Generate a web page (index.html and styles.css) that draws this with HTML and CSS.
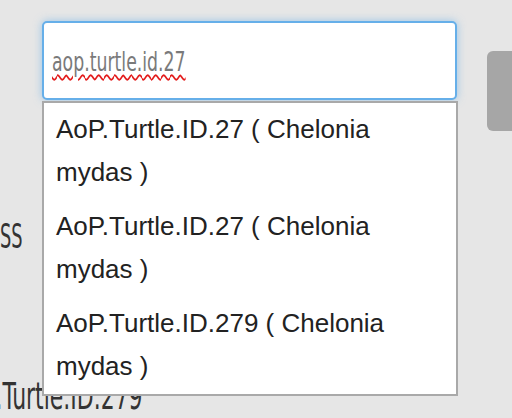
FILE: index.html
```html
<!DOCTYPE html>
<html lang="en">
<head>
<meta charset="utf-8">
<title>Turtle search</title>
<link rel="stylesheet" href="styles.css">
</head>
<body>
<div class="page">
  <div class="search-row">
    <div class="search">
      <div class="search-input"><span class="query">aop.turtle.id.27</span></div>
      <ul class="suggestions">
        <li>AoP.Turtle.ID.27 ( Chelonia mydas )</li>
        <li>AoP.Turtle.ID.27 ( Chelonia mydas )</li>
        <li>AoP.Turtle.ID.279 ( Chelonia mydas )</li>
      </ul>
    </div>
    <div class="side-btn"></div>
  </div>
  <div class="label label-ss"><span class="squeeze">SS</span></div>
  <div class="label label-id"><span class="squeeze">P.Turtle.ID.279</span></div>
</div>
</body>
</html>
```
FILE: styles.css
```css
html, body {
  margin: 0;
  padding: 0;
  background: #e6e6e6;
  overflow: hidden;
}

.page {
  padding-top: 21px;
  width: 512px;
  height: 418px;
  box-sizing: border-box;
  overflow: hidden;
}

.search-row {
  display: flex;
  align-items: flex-start;
  gap: 30px;
  margin-left: 42px;
}

.search {
  position: relative;
  width: 415px;
  flex: none;
}

.search-input {
  box-sizing: border-box;
  height: 79px;
  border: 2px solid #66afe9;
  border-radius: 5px;
  background: #fff;
  box-shadow: 0 0 8px rgba(102, 175, 233, 0.6);
  padding: 25px 0 0 8px;
  font-family: "DejaVu Sans Condensed", "Liberation Sans", sans-serif;
  font-size: 26px;
  line-height: 28px;
  color: #7a7a7a;
}

.query {
  display: inline-block;
  transform: scaleX(0.74);
  transform-origin: left center;
  text-decoration: underline wavy #e31b1b;
  text-decoration-thickness: 1.5px;
  text-underline-offset: 3px;
}

.suggestions {
  position: absolute;
  left: 0;
  top: 80px;
  width: 416px;
  box-sizing: border-box;
  margin: 0;
  padding: 0;
  list-style: none;
  background: #fff;
  border: 2px solid #a9a9a9;
  z-index: 2;
}

.suggestions li {
  padding: 5px 20px 6px 12px;
  font-family: "Liberation Sans", Arial, sans-serif;
  font-size: 26px;
  line-height: 43px;
  color: #222;
}

.side-btn {
  flex: none;
  width: 40px;
  height: 80px;
  margin-top: 30px;
  background: #a6a6a6;
  border-radius: 6px;
}

.label {
  font-family: "DejaVu Sans Condensed", "Liberation Sans", sans-serif;
  color: #333;
  white-space: nowrap;
}

.squeeze {
  display: inline-block;
  transform-origin: left center;
}

.label-ss {
  margin-top: 88px;
  font-size: 34px;
  line-height: 34px;
}

.label-ss .squeeze {
  transform: scaleX(0.58);
}

.label-id {
  margin-top: 129px;
  margin-left: -14px;
  font-size: 37px;
  line-height: 30px;
}

.label-id .squeeze {
  transform: scaleX(0.66);
}
```
